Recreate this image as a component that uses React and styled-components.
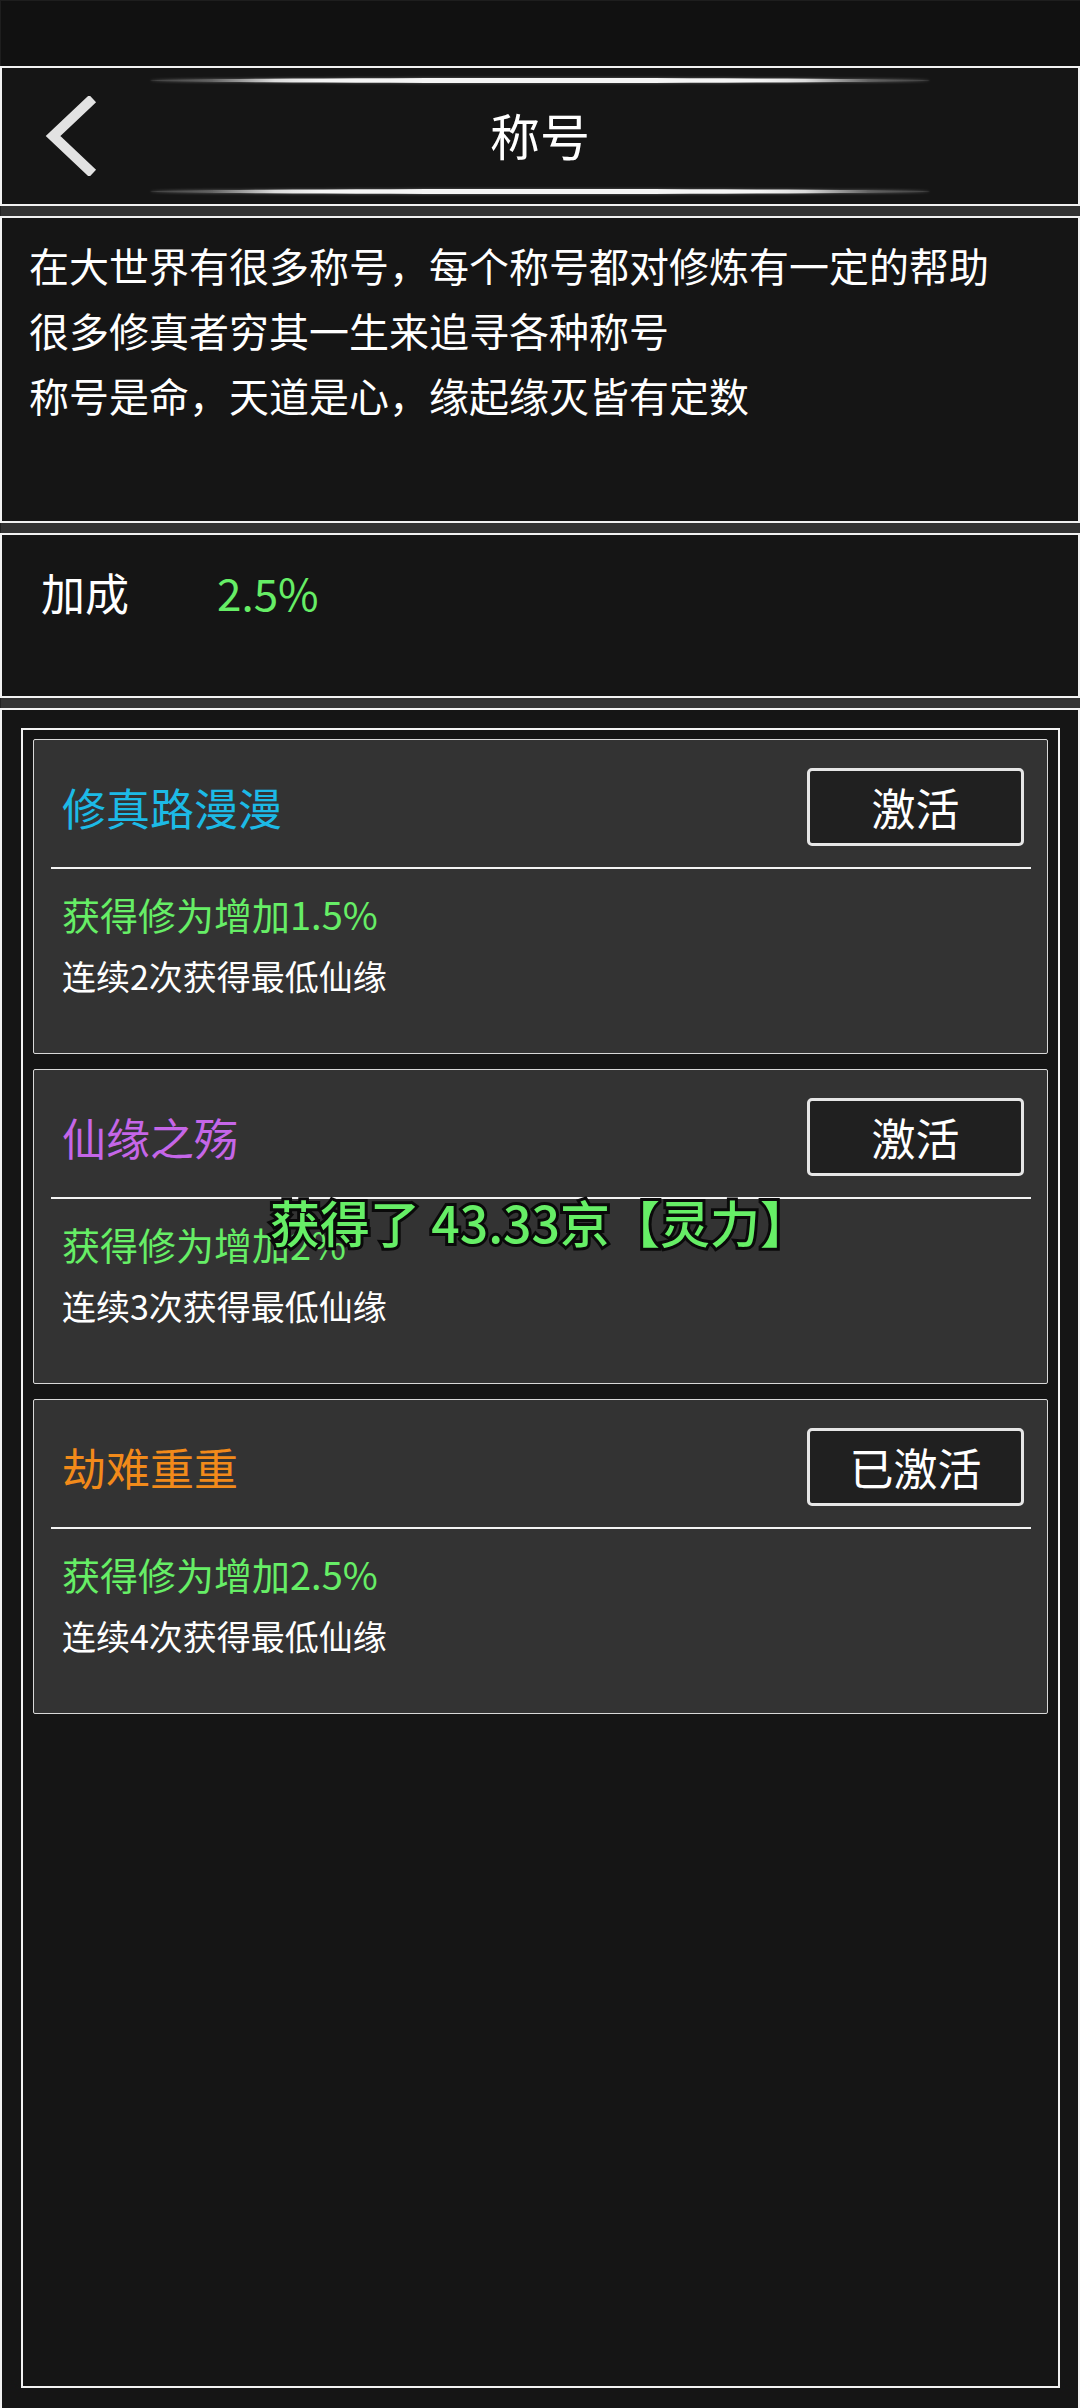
import React from "react";
import styled, { createGlobalStyle } from "styled-components";

const Global = createGlobalStyle`
  html, body { margin: 0; padding: 0; background: #151515; }
  body { font-family: "Noto Sans CJK SC", "Noto Sans", sans-serif; color: #fff; }
  * { box-sizing: border-box; }
`;

const Page = styled.div`
  width: 1080px;
  min-height: 2408px;
  background: #151515;
  display: flex;
  flex-direction: column;
  position: relative;
  overflow: hidden;
`;

const StatusBar = styled.div`
  height: 66px;
  background: #111111;
  border-top: 1px solid #1e1e1e;
  border-left: 1px solid #1e1e1e;
`;

const Panel = styled.div`
  border: 2px solid #f2f2f2;
  border-bottom-width: ${(p) => (p.$open ? 0 : 2)}px;
  background: #151515;
  height: ${(p) => p.$h}px;
  flex: ${(p) => (p.$grow ? 1 : "none")};
`;

const Strip = styled.div`
  height: 10px;
  background: #333333;
  border-left: 1px solid #222;
`;

const Header = styled(Panel)`
  display: grid;
  grid-template-columns: 148px 780px 1fr;
  align-items: center;
`;

const Back = styled.div`
  width: 52px;
  height: 80px;
  margin-left: 43px;
  display: flex;
  align-items: center;
`;

const TitleCol = styled.div`
  height: 100%;
  display: flex;
  flex-direction: column;
  justify-content: space-between;
  align-items: center;
  padding: 10px 0 10px;
`;

const GlowLine = styled.div`
  width: 780px;
  height: 5px;
  border-radius: 50%;
  background: linear-gradient(
    90deg,
    rgba(90, 90, 90, 0.6) 0%,
    rgba(120, 120, 120, 0.8) 8%,
    rgba(230, 230, 230, 0.95) 16%,
    #f4f4f4 22%,
    #f4f4f4 78%,
    rgba(230, 230, 230, 0.95) 84%,
    rgba(120, 120, 120, 0.8) 92%,
    rgba(90, 90, 90, 0.6) 100%
  );
  box-shadow: 0 0 3px rgba(255, 255, 255, 0.35);
`;

const PageTitle = styled.div`
  font-size: 50px;
  line-height: 60px;
  margin-top: -4px;
  color: #ffffff;
`;

const Desc = styled(Panel)`
  padding: 15px 27px;
  font-size: 40px;
  line-height: 65px;
  color: #ffffff;
`;

const Line = styled.div`
  white-space: nowrap;
`;

const Bonus = styled(Panel)`
  padding: 28px 39px;
  display: flex;
  align-items: flex-start;
  gap: 88px;
  font-size: 44px;
  line-height: 58px;
`;

const BonusLabel = styled.span`
  color: #ffffff;
`;

const BonusValue = styled.span`
  color: #66ee66;
`;

const Main = styled(Panel)`
  padding: 18px 18px 20px 19px;
  display: flex;
  flex-direction: column;
`;

const ListBox = styled.div`
  flex: 1;
  border: 2px solid #f2f2f2;
  padding: 9px 10px;
  display: flex;
  flex-direction: column;
  gap: 15px;
`;

const Card = styled.div`
  height: 315px;
  background: #333333;
  border: 1px solid #d8d8d8;
  border-radius: 2px;
  padding: 28px 23px 0 28px;
  display: flex;
  flex-direction: column;
`;

const CardHead = styled.div`
  display: flex;
  align-items: center;
  justify-content: space-between;
  height: 78px;
`;

const CardTitle = styled.div`
  font-size: 44px;
  line-height: 56px;
  color: ${(p) => p.$color};
`;

const Button = styled.div`
  width: 217px;
  height: 78px;
  border: 3px solid #e6e6e6;
  border-radius: 5px;
  background: #202020;
  display: flex;
  align-items: center;
  justify-content: center;
  font-size: 44px;
  color: #ffffff;
`;

const Divider = styled.div`
  height: 2px;
  background: #f4f4f4;
  margin: 21px -7px 0 -11px;
`;

const Effect = styled.div`
  margin-top: 20px;
  font-size: 38px;
  line-height: 50px;
  color: #66ee66;
`;

const Cond = styled.div`
  margin-top: 14px;
  font-size: 34px;
  line-height: 46px;
  color: #ffffff;
`;

const Toast = styled.div`
  position: absolute;
  top: 1186px;
  left: 0;
  width: 1080px;
  text-align: center;
  font-size: 50px;
  line-height: 70px;
  font-weight: 500;
  color: #66ee66;
  -webkit-text-stroke: 6px #0a0a0a;
  paint-order: stroke fill;
  white-space: pre;
  pointer-events: none;
`;

const titles = [
  { name: "修真路漫漫", color: "#1cbae6", btn: "激活", eff: "获得修为增加1.5%", n: 2 },
  { name: "仙缘之殇", color: "#c566e8", btn: "激活", eff: "获得修为增加2%", n: 3 },
  { name: "劫难重重", color: "#f28a1a", btn: "已激活", eff: "获得修为增加2.5%", n: 4 },
];

export default function App() {
  return (
    <>
      <Global />
      <Page>
        <StatusBar />
        <Header $h={140}>
          <Back>
            <svg width="52" height="80" viewBox="0 0 52 80">
              <polyline
                points="44,6 8,40 44,74"
                fill="none"
                stroke="#e2e2e2"
                strokeWidth="10"
                strokeLinecap="square"
                strokeLinejoin="miter"
              />
            </svg>
          </Back>
          <TitleCol>
            <GlowLine />
            <PageTitle>称号</PageTitle>
            <GlowLine />
          </TitleCol>
          <div />
        </Header>
        <Strip />
        <Desc $h={307}>
          <Line>在大世界有很多称号，每个称号都对修炼有一定的帮助</Line>
          <Line>很多修真者穷其一生来追寻各种称号</Line>
          <Line>称号是命，天道是心，缘起缘灭皆有定数</Line>
        </Desc>
        <Strip />
        <Bonus $h={165}>
          <BonusLabel>加成</BonusLabel>
          <BonusValue>2.5%</BonusValue>
        </Bonus>
        <Strip />
        <Main $grow $open>
          <ListBox>
            {titles.map((t) => (
              <Card key={t.name}>
                <CardHead>
                  <CardTitle $color={t.color}>{t.name}</CardTitle>
                  <Button>{t.btn}</Button>
                </CardHead>
                <Divider />
                <Effect>{t.eff}</Effect>
                <Cond>{`连续${t.n}次获得最低仙缘`}</Cond>
              </Card>
            ))}
          </ListBox>
        </Main>
        <Toast>获得了 43.33京【灵力】</Toast>
      </Page>
    </>
  );
}
